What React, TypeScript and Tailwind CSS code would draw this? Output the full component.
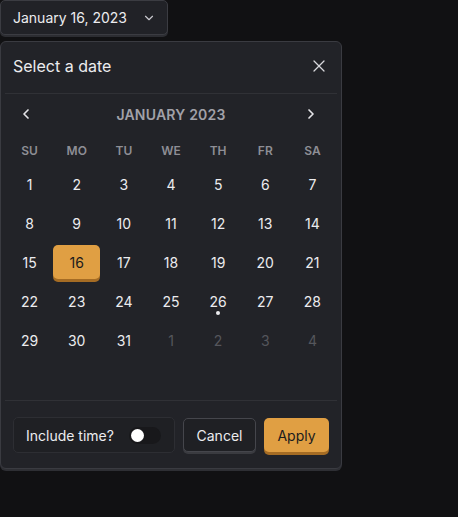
import { ChevronDown, ChevronLeft, ChevronRight, X } from 'lucide-react';

const weekdays = ['SU', 'MO', 'TU', 'WE', 'TH', 'FR', 'SA'];

type Day = { n: number; muted?: boolean; selected?: boolean; today?: boolean };

function buildDays(): Day[] {
  const days: Day[] = [];
  for (let i = 1; i <= 31; i++) {
    days.push({ n: i, selected: i === 16, today: i === 26 });
  }
  for (let i = 1; i <= 4; i++) days.push({ n: i, muted: true });
  return days;
}

export default function App() {
  const days = buildDays();

  return (
    <div className="min-h-[517px] w-[458px] bg-[#111113] text-[#ececef]" style={{ fontFamily: 'Inter, "Noto Sans", sans-serif' }}>
      {/* trigger */}
      <button className="flex h-[35px] w-[168px] items-center justify-between rounded-[5px] border border-[#3b3c42] bg-[#212227] pl-[12px] pr-[11px] text-[14px] text-[#ececef] shadow-[0_2px_0_#2c2d32]">
        <span>January 16, 2023</span>
        <ChevronDown size={14} strokeWidth={2} className="text-[#c9c9cf]" />
      </button>

      {/* popover */}
      <div className="mt-[6px] w-[342px] rounded-[6px] border border-[#3a3b41] bg-[#222328] shadow-[0_2px_0_#2e2f34]">
        <div className="flex h-[51px] items-center justify-between pb-[3px] pl-[12px] pr-[12px]">
          <span className="text-[16px] text-[#ececef]">Select a date</span>
          <X size={20} strokeWidth={1.5} className="text-[#d8d8dc]" />
        </div>
        <div className="mx-[4px] h-px bg-[#303136]" />

        <div className="px-[5px] pt-[10px]">
          <div className="flex h-[20px] items-center justify-between pl-[12px] pr-[17px]">
            <ChevronLeft size={16} strokeWidth={2.5} className="text-[#e4e4e8]" />
            <span className="ml-[5px] text-[14px] font-semibold tracking-[0.2px] text-[#a1a1a8]">JANUARY 2023</span>
            <ChevronRight size={16} strokeWidth={2.5} className="text-[#e4e4e8]" />
          </div>

          <div className="mt-[20px] grid grid-cols-7">
            {weekdays.map((w) => (
              <div key={w} className="flex h-[14px] items-center justify-center text-[12px] font-semibold text-[#8e8e95]">
                {w}
              </div>
            ))}
          </div>

          <div className="mt-[9px] grid grid-cols-7 gap-y-[5px]">
            {days.map((d, i) => (
              <div key={i} className="flex h-[34px] items-center justify-center">
                {d.selected ? (
                  <div className="flex h-[34px] w-[48px] items-center justify-center rounded-[5px] bg-[#e09f43] text-[14px] text-[#1b1b1d] shadow-[0_3px_0_#a56c24]">
                    {d.n}
                  </div>
                ) : (
                  <div className={`relative flex h-[34px] w-[48px] items-center justify-center text-[14px] ${d.muted ? 'text-[#55565c]' : 'text-[#ececef]'}`}>
                    {d.n}
                    {d.today && <span className="absolute bottom-[3px] left-1/2 h-[4px] w-[4px] -translate-x-1/2 rounded-full bg-[#ececef]" />}
                  </div>
                )}
              </div>
            ))}
          </div>
        </div>

        <div className="mx-[4px] mt-[43px] h-px bg-[#303136]" />

        <div className="flex items-center gap-[8px] px-[12px] pb-[15px] pt-[16px]">
          <div className="flex h-[36px] w-[162px] items-center gap-[15px] rounded-[5px] border border-[#2d2e33] bg-[#1f2024] pl-[12px]">
            <span className="text-[14px] text-[#ececef]">Include time?</span>
            <div className="flex h-[17px] w-[32px] items-center rounded-full bg-[#18181b] pl-[2px]">
              <div className="h-[13px] w-[13px] rounded-full bg-white" />
            </div>
          </div>
          <button className="flex h-[34px] w-[73px] items-center justify-center rounded-[5px] border border-[#45464c] bg-[#1f2024] text-[14px] text-[#ececef] shadow-[0_2px_0_#3a3b40]">
            Cancel
          </button>
          <button className="flex h-[34px] w-[65px] items-center justify-center rounded-[5px] bg-[#e09f43] text-[14px] text-[#1b1b1d] shadow-[0_3px_0_#a56c24]">
            Apply
          </button>
        </div>
      </div>
    </div>
  );
}
